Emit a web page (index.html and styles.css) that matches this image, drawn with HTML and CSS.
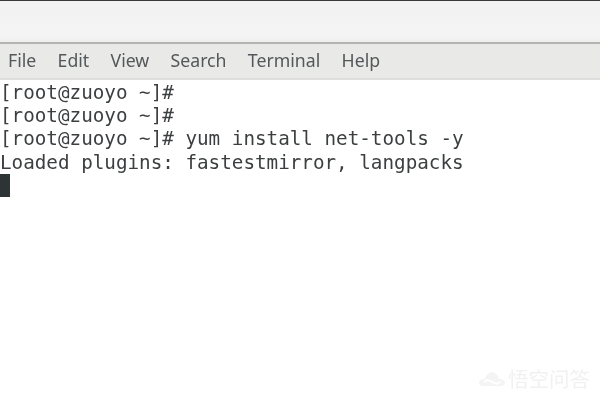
FILE: index.html
```html
<!DOCTYPE html>
<html lang="en">
<head>
<meta charset="utf-8">
<title>Terminal</title>
<link rel="stylesheet" href="styles.css">
</head>
<body>
<div class="window">
  <div class="topedge"></div>
  <header class="titlebar"></header>
  <nav class="menubar">
    <span>File</span><span>Edit</span><span>View</span><span>Search</span><span>Terminal</span><span>Help</span>
  </nav>
  <main class="terminal">
    <div class="line">[root@zuoyo ~]#</div>
    <div class="line">[root@zuoyo ~]#</div>
    <div class="line">[root@zuoyo ~]# yum install net-tools -y</div>
    <div class="line">Loaded plugins: fastestmirror, langpacks</div>
    <div class="cursor"></div>
  </main>
</div>
<div class="watermark">
  <svg class="cloud" width="28" height="18" viewBox="0 0 28 18">
    <path d="M1 14c0-3 3-4 6-4 1-4 4-7 7-7s6 3 7 7c3 0 6 1 6 4 0 2-2 3-4 3H5c-2 0-4-1-4-3z" fill="#f4f4f4"/>
    <path d="M6 13c2-2 5-2 8 0s6 2 8 0" fill="none" stroke="#fff" stroke-width="2"/>
  </svg>
  <span class="wm-text">悟空问答</span>
</div>
</body>
</html>
```
FILE: styles.css
```css
html, body {
  margin: 0;
  width: 600px;
  height: 400px;
  overflow: hidden;
  background: #fff;
}
body {
  position: relative;
}
.window {
  display: flex;
  flex-direction: column;
  height: 400px;
  filter: blur(0.5px);
}
.topedge {
  flex: none;
  height: 1px;
  background: #3a3a3a;
}
.titlebar {
  flex: none;
  height: 41px;
  background: linear-gradient(#f2f2f2, #f4f4f4 85%, #efefef);
}
.menubar {
  flex: none;
  box-sizing: border-box;
  height: 38px;
  display: flex;
  align-items: center;
  gap: 21.3px;
  padding: 0 8px 2px;
  background: #e9e9e8;
  border-top: 2px solid #b4b4b2;
  border-bottom: 2px solid #dedede;
  font-family: "Noto Sans", "Open Sans", sans-serif;
  font-size: 17.7px;
  color: #54585a;
}
.terminal {
  flex: 1;
  min-height: 0;
  background: #fff;
  padding-top: 1px;
  font-family: "DejaVu Sans Mono", monospace;
  font-size: 19.25px;
  line-height: 23.2px;
  color: #3c3f40;
}
.line {
  height: 23.2px;
  white-space: pre;
}
.cursor {
  width: 10px;
  height: 23px;
  background: #2e3436;
}
.watermark {
  position: absolute;
  left: 478px;
  top: 366px;
  display: flex;
  align-items: center;
  gap: 2px;
  filter: blur(0.7px);
}
.wm-text {
  font-family: "Noto Sans CJK SC", sans-serif;
  font-size: 20.5px;
  line-height: 24px;
  color: #f1f1f1;
}
```
